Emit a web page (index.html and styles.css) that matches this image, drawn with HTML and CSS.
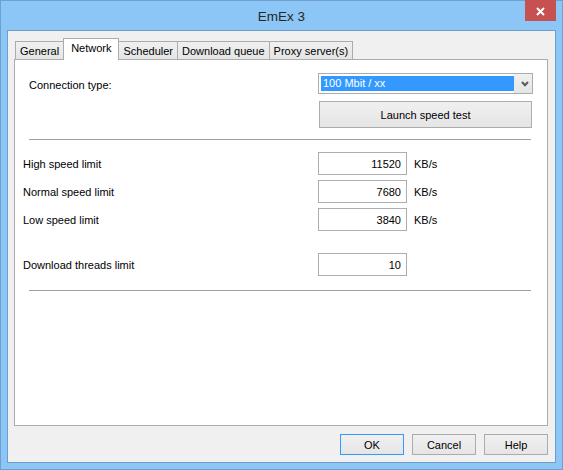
FILE: index.html
```html
<!DOCTYPE html>
<html>
<head>
<meta charset="utf-8">
<title>EmEx 3</title>
<link rel="stylesheet" href="styles.css">
</head>
<body>
<div class="window">
  <div class="titlebar">
    <span class="title">EmEx 3</span>
    <div class="close">
      <svg width="9" height="9" viewBox="0 0 9 9"><path d="M1 1L8 8M8 1L1 8" stroke="#fff" stroke-width="2" fill="none"/></svg>
    </div>
  </div>
  <div class="client">
    <div class="tabs">
      <div class="tab">General</div>
      <div class="tab tab-active">Network</div>
      <div class="tab">Scheduler</div>
      <div class="tab">Download queue</div>
      <div class="tab">Proxy server(s)</div>
    </div>
    <div class="panel">
      <div class="conn">
        <div class="conn-label">Connection type:</div>
        <div class="conn-controls">
          <div class="combo">
            <div class="combo-sel">100 Mbit / xx</div>
            <div class="combo-arrow">
              <svg width="8" height="6" viewBox="0 0 8 6"><path d="M1 1L4 4.2L7 1" stroke="#5a5a5a" stroke-width="2" fill="none"/></svg>
            </div>
          </div>
          <button class="btn btn-wide">Launch speed test</button>
        </div>
      </div>
      <div class="sep"></div>
      <div class="limits">
        <div class="row">
          <div class="row-label">High speed limit</div>
          <input class="field" type="text" value="11520" readonly>
          <div class="unit">KB/s</div>
        </div>
        <div class="row">
          <div class="row-label">Normal speed limit</div>
          <input class="field" type="text" value="7680" readonly>
          <div class="unit">KB/s</div>
        </div>
        <div class="row">
          <div class="row-label">Low speed limit</div>
          <input class="field" type="text" value="3840" readonly>
          <div class="unit">KB/s</div>
        </div>
        <div class="row row-spaced">
          <div class="row-label">Download threads limit</div>
          <input class="field" type="text" value="10" readonly>
        </div>
      </div>
      <div class="sep sep-bottom"></div>
    </div>
    <div class="footer">
      <button class="btn btn-default">OK</button>
      <button class="btn">Cancel</button>
      <button class="btn">Help</button>
    </div>
  </div>
</div>
</body>
</html>
```
FILE: styles.css
```css
html, body {
  margin: 0;
  padding: 0;
}
body {
  width: 563px;
  height: 470px;
  overflow: hidden;
  font-family: "Liberation Sans", Arial, sans-serif;
  font-size: 11px;
  color: #000;
}
.window {
  box-sizing: border-box;
  width: 563px;
  height: 470px;
  border: 1px solid #6e9fcf;
  background: #8cc6f6;
  padding: 0 6px 6px;
  display: flex;
  flex-direction: column;
}
.titlebar {
  height: 29px;
  flex: none;
  position: relative;
  display: flex;
  align-items: center;
  justify-content: center;
}
.title {
  font-size: 13.5px;
  color: #262626;
  padding-top: 1px;
}
.close {
  position: absolute;
  top: -1px;
  right: 0;
  width: 31px;
  height: 21px;
  background: #c75050;
  display: flex;
  align-items: center;
  justify-content: center;
  padding-top: 1px;
  box-sizing: border-box;
}
.close svg {
  display: block;
}
.client {
  flex: 1;
  min-height: 0;
  border: 1px solid #6f9cc8;
  background: #f0f0f0;
  padding: 7px 7px 7px 6px;
  display: flex;
  flex-direction: column;
}
.tabs {
  height: 21px;
  flex: none;
  display: flex;
  align-items: flex-end;
  padding-left: 1px;
  position: relative;
  z-index: 1;
}
.tab {
  box-sizing: border-box;
  height: 18px;
  padding: 0 4px;
  border: 1px solid #acacac;
  border-bottom: none;
  background: linear-gradient(#f0f0f0, #e5e5e5);
  margin-left: -1px;
  display: flex;
  align-items: center;
  white-space: nowrap;
}
.tab:first-child {
  margin-left: 0;
}
.tab-active {
  height: 22px;
  margin-bottom: -1px;
  background: #fff;
  padding: 0 7px 3px 7px;
  position: relative;
  z-index: 2;
}
.panel {
  flex: 1;
  min-height: 0;
  border: 1px solid #acacac;
  background: #fff;
  display: flex;
  flex-direction: column;
}
.conn {
  display: flex;
  justify-content: space-between;
  padding: 13px 14px 0 14px;
}
.conn-label {
  padding-top: 5px;
  line-height: 14px;
}
.conn-controls {
  width: 215px;
  display: flex;
  flex-direction: column;
  align-items: center;
  gap: 7px;
}
.combo {
  box-sizing: border-box;
  width: 215px;
  height: 21px;
  border: 1px solid #acacac;
  background: #fff;
  display: flex;
  padding: 2px 0 2px 2px;
}
.combo-sel {
  width: 193px;
  height: 15px;
  background: #3399ff;
  color: #fff;
  padding-left: 2px;
  box-sizing: border-box;
  line-height: 15px;
}
.combo-arrow {
  flex: 1;
  margin: -2px 0 -2px 0;
  background: linear-gradient(#f0f0f0, #e5e5e5);
  display: flex;
  align-items: center;
  justify-content: center;
  padding-left: 3px;
}
.combo-arrow svg {
  display: block;
}
.btn {
  box-sizing: border-box;
  width: 64px;
  height: 21px;
  margin: 0;
  padding: 0;
  border: 1px solid #acacac;
  background: linear-gradient(#f0f0f0, #e5e5e5);
  font-family: inherit;
  font-size: 11px;
  color: #000;
}
.btn-wide {
  width: 213px;
  height: 27px;
}
.btn-default {
  border-color: #3399ff;
}
.sep {
  height: 1px;
  background: #a0a0a0;
  margin: 11px 16px 0 14px;
}
.sep-bottom {
  margin-top: 14px;
}
.limits {
  margin-top: 12px;
  padding-left: 8px;
  display: flex;
  flex-direction: column;
  gap: 5px;
}
.row {
  display: flex;
  align-items: center;
  height: 23px;
}
.row-spaced {
  margin-top: 17px;
}
.row-label {
  width: 295px;
}
.field {
  box-sizing: border-box;
  width: 89px;
  height: 23px;
  margin: 0;
  border: 1px solid #abadb3;
  padding: 0 5px 0 2px;
  text-align: right;
  font-family: inherit;
  font-size: 11px;
  color: #000;
  background: #fff;
  outline: none;
}
.unit {
  margin-left: 7px;
}
.footer {
  flex: none;
  margin-top: 8px;
  display: flex;
  justify-content: flex-end;
  gap: 8px;
}
```
